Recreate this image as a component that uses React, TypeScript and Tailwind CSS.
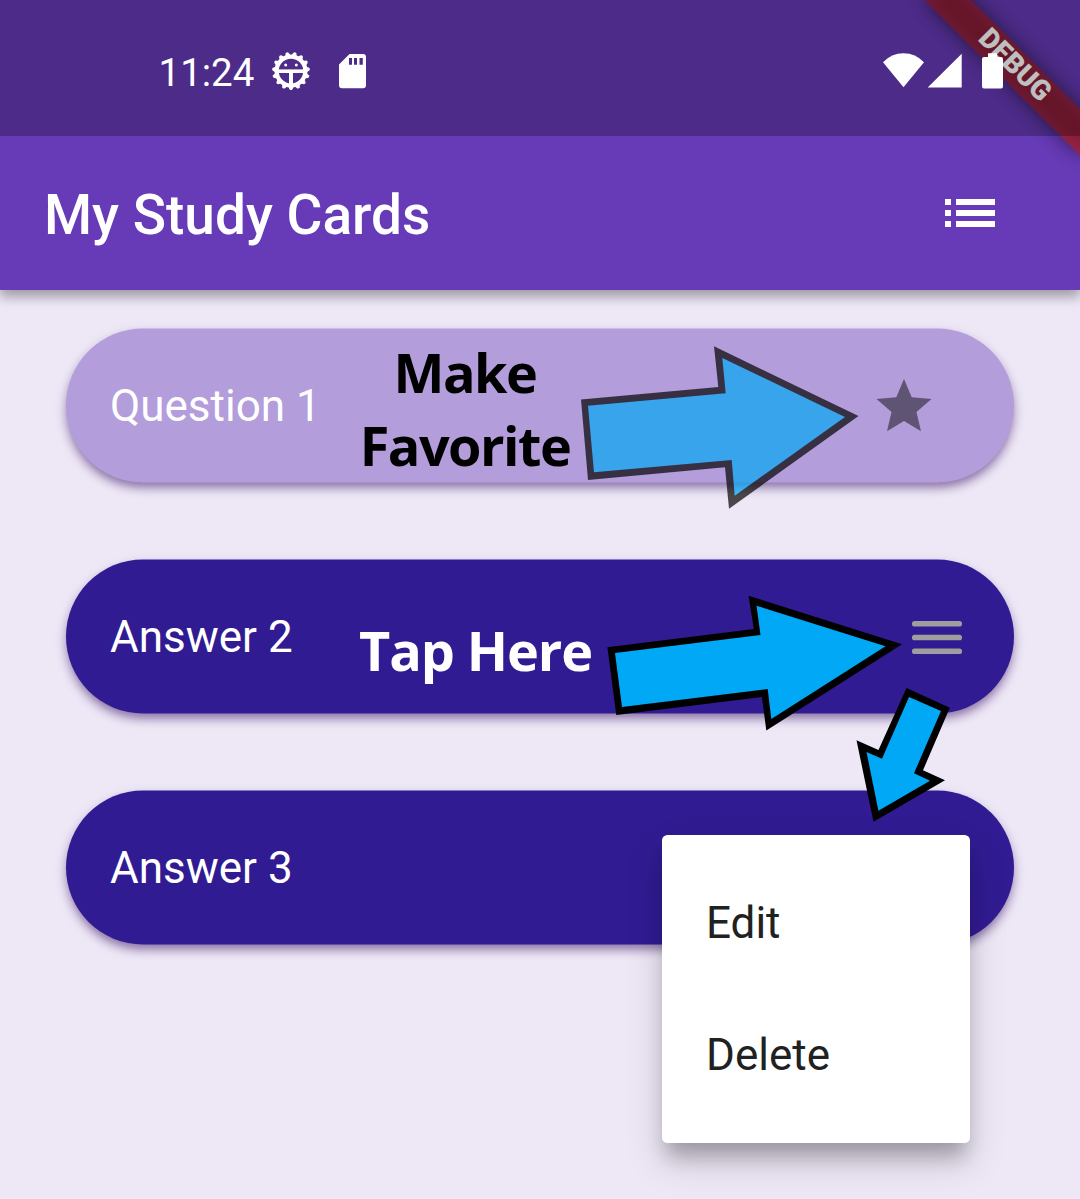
import React from "react";

const TOOTH_ANGLES = Array.from({ length: 15 }, (_, i) => 90 + i * 24);

function DebugBugIcon() {
  return (
    <svg width="40" height="40" viewBox="-20 -20 40 40" fill="none" stroke="#fff">
      <circle r="14.4" strokeWidth="4.2" />
      {TOOTH_ANGLES.map((a) => (
        <path key={a} d="M15 -3L18.4 -1.4Q19.8 0 18.4 1.4L15 3Z" fill="#fff" stroke="none" transform={`rotate(${a})`} />
      ))}
      <path d="M-14 0.2H14" strokeWidth="3.6" />
      <path d="M0 1V14" strokeWidth="4" />
      <circle cx="-5.3" cy="-6" r="1.5" fill="#fff" stroke="none" />
      <circle cx="5.3" cy="-6" r="1.5" fill="#fff" stroke="none" />
    </svg>
  );
}

function StatusBar() {
  return (
    <div className="relative flex h-[136px] items-start bg-black/25 text-white">
      <span className="ml-[158.5px] mt-[50px] w-[97.5px] whitespace-nowrap text-[38.5px] leading-[46px]">11:24</span>
      <div className="ml-[15px] mt-[51px]">
        <DebugBugIcon />
      </div>
      <svg className="ml-[28px] mt-[53px]" width="27" height="36" viewBox="0 0 27 36">
        <path
          fillRule="evenodd"
          fill="#fff"
          d="M10.5 1H24Q27 1 27 4V32Q27 35.3 24 35.3H3Q0 35.3 0 32V11.5ZM10 5V11.7H13V5ZM15 5V11.7H18V5ZM20.5 5V11.7H23.8V5Z"
        />
      </svg>
      <div className="ml-auto mr-[77px] mt-[53px] flex h-9 items-start">
        <svg width="41" height="36" viewBox="0 0 41 36" fill="#fff">
          <path d="M20.5 34.3L0 9.3Q8.5 0.3 20.5 0.3T41 9.3Z" />
        </svg>
        <svg className="ml-[3px]" width="35" height="36" viewBox="0 0 35 36" fill="#fff">
          <path d="M0.7 34.6L34.7 0.8V34.6Z" />
        </svg>
        <svg className="ml-[20px]" width="21" height="36" viewBox="0 0 21 36" fill="#fff">
          <path d="M6 0.3H15V4H19Q21 4 21 6V33.5Q21 35.6 19 35.6H2Q0 35.6 0 33.5V6Q0 4 2 4H6Z" />
        </svg>
      </div>
    </div>
  );
}

function DebugBanner() {
  return (
    <div className="pointer-events-none absolute right-0 top-0 h-[290px] w-[290px] overflow-hidden">
      <div className="absolute left-[290px] top-0 h-0 w-0 origin-top-left rotate-45">
        <div className="absolute -left-[110px] top-[77px] h-[33px] w-[220px] bg-black/50 blur-[10px]" />
        <div className="absolute -left-[110px] top-[77px] flex h-[33px] w-[220px] items-center justify-center bg-[#b71c1c]/63 pb-[4px] text-[28px] font-black leading-none text-white">
          DEBUG
        </div>
      </div>
    </div>
  );
}

function AppBar() {
  return (
    <div className="flex h-[154px] items-center justify-between pl-[44px] pr-[85px] text-white">
      <h1 className="pt-[4px] text-[55px] font-medium leading-[64px]">My Study Cards</h1>
      <svg width="50" height="28" viewBox="0 0 50 28" fill="#fff">
        <path d="M0 0h6v6H0zM11 0h39v6H11zM0 11h6v6H0zM11 11h39v6H11zM0 22h6v6H0zM11 22h39v6H11z" />
      </svg>
    </div>
  );
}

function StudyCard({ label, tone, children }: { label: string; tone: string; children?: React.ReactNode }) {
  return (
    <div
      className={`flex h-[154px] items-center justify-between rounded-full pl-[44px] shadow-[0_6px_9px_-1px_rgba(60,20,100,0.45),0_5px_14px_rgba(60,20,100,0.14)] ${tone}`}
    >
      <span className="text-[44px] leading-[52px] text-white">{label}</span>
      {children}
    </div>
  );
}

function StarIcon() {
  return (
    <svg className="mr-[77px] mt-[2px]" width="66" height="66" viewBox="0 0 24 24" fill="#605475">
      <path d="M12 17.27L18.18 21l-1.64-7.03L22 9.24l-7.19-.61L12 2 9.19 8.63 2 9.24l5.46 4.73L5.82 21z" />
    </svg>
  );
}

function MenuIcon() {
  return (
    <svg className="mr-[52px] mt-[1px]" width="50" height="34" viewBox="0 0 50 34" fill="#9e9e9e">
      <rect y="0.5" width="50" height="5.5" rx="2.6" />
      <rect y="14.3" width="50" height="5.5" rx="2.6" />
      <rect y="28" width="50" height="5.5" rx="2.6" />
    </svg>
  );
}

function PopupMenu() {
  return (
    <div className="absolute left-[662px] top-[835px] flex h-[308px] w-[308px] flex-col rounded-[5.5px] bg-white py-[22px] text-[44px] leading-[52px] text-[#212121] shadow-[0_18px_18px_-6px_rgba(0,0,0,0.24),0_18px_36px_2px_rgba(0,0,0,0.15)]">
      <div className="flex h-[132px] items-center pl-[44px]">Edit</div>
      <div className="flex h-[132px] items-center pl-[44px]">Delete</div>
    </div>
  );
}

function Annotations() {
  return (
    <>
      <svg className="pointer-events-none absolute left-0 top-0" width="1080" height="1199" viewBox="0 0 1080 1199">
        <g opacity="0.69">
          <path d="M581 399.5L718.3 387L714 346.3L858.5 416L729 508.7L725 467.3L588 480Z" />
          <path fill="#00a8f5" d="M588 405.7L725.7 393.3L722.3 358L845 417L734.7 495.7L731.7 460L594 472.3Z" />
        </g>
        <path d="M607.4 647.3L753.8 629L748.5 595.7L902 644.3L766.3 730.5L761.9 697L616.3 715Z" />
        <path fill="#00a8f5" d="M615 653L760.5 635L756.5 605.7L885.5 646.3L771.3 719L767.7 689L622 707Z" />
        <path d="M906.5 688L949.8 707.7L923 770.3L945 780.3L873.5 821.7L856.5 740.3L878.5 750Z" />
        <path fill="#00a8f5" d="M909 697L941 711L914 773.3L930 780.7L878.4 810.7L866.5 752L882 758.7Z" />
      </svg>
      <div className="absolute left-[340px] top-[336px] w-[250px] text-center font-['Open_Sans','Noto_Sans',sans-serif] text-[54px] font-bold leading-[73px] tracking-[-1.5px] text-black">
        Make
        <br />
        Favorite
      </div>
      <div className="absolute left-[359px] top-[614px] whitespace-nowrap font-['Open_Sans','Noto_Sans',sans-serif] text-[54px] font-bold leading-[73px] tracking-[-1.1px] text-white">
        Tap Here
      </div>
    </>
  );
}

export default function App() {
  return (
    <div className="relative h-[1199px] w-[1080px] overflow-hidden bg-[#ede7f6] font-[Roboto,sans-serif]">
      <header className="relative h-[290px] bg-[#673ab7] shadow-[0_7px_11px_rgba(0,0,0,0.26),0_3px_14px_rgba(0,0,0,0.12)]">
        <DebugBanner />
        <StatusBar />
        <AppBar />
      </header>
      <main className="flex translate-y-[0.5px] flex-col gap-[77px] px-[66px] pt-[38px]">
        <StudyCard label="Question 1" tone="bg-[#b39ddb]">
          <StarIcon />
        </StudyCard>
        <StudyCard label="Answer 2" tone="bg-[#311b92]">
          <MenuIcon />
        </StudyCard>
        <StudyCard label="Answer 3" tone="bg-[#311b92]" />
      </main>
      <PopupMenu />
      <Annotations />
    </div>
  );
}
